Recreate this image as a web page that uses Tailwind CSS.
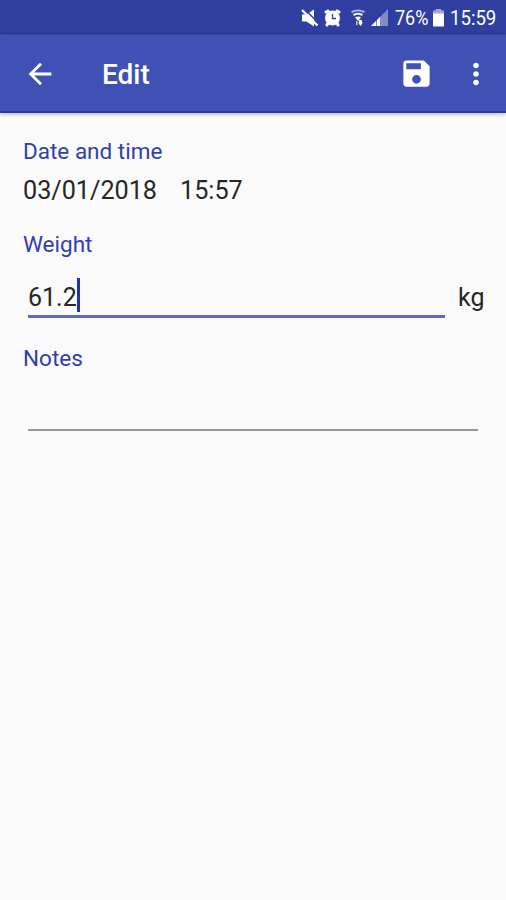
<!DOCTYPE html>
<html lang="en">
  <head>
    <meta charset="UTF-8" />
    <meta name="viewport" content="width=device-width, initial-scale=1" />
    <title>Edit</title>
    <script src="https://cdn.jsdelivr.net/npm/@tailwindcss/browser@4"></script>
  </head>
  <body class="min-h-screen bg-[#fafafa] font-[Roboto,sans-serif] text-[#262626]">
    <!-- Status bar -->
    <div class="flex h-[34px] items-center justify-end bg-[#303f9f] pt-[2px] pr-[10px] text-white">
      <svg class="mr-[5px] h-[18px] w-[18px]" viewBox="0 0 18 18">
        <path fill="currentColor" d="M1 5.500h4.500l7.500-5v17l-7.500-5H1z" />
        <path stroke="#303f9f" stroke-width="1.500" d="M3.500 0l15 15" />
        <path stroke="currentColor" stroke-width="2.400" d="M1 1l15.500 15.500" />
      </svg>
      <svg class="mr-[9px] h-[18px] w-[18px]" viewBox="0 0 18 18" fill="none">
        <circle cx="8.500" cy="9" r="7.500" fill="currentColor" />
        <path stroke="currentColor" stroke-width="3" stroke-linecap="round" d="M2 3l2-1M15 3l-2-1M4 14l-1 2M13 14l1 2" />
        <path stroke="#303f9f" stroke-width="1.300" d="M8.500 5v4.500h3.500" />
      </svg>
      <svg class="mr-[5px] h-[18px] w-[15px]" viewBox="0 0 15 18" fill="none">
        <path stroke="currentColor" stroke-opacity=".6" stroke-width="2" d="M.5 3q6.500-3 13 0" />
        <path stroke="currentColor" stroke-opacity=".9" stroke-width="2.200" d="M2.500 6q4.500-2.500 9 0" />
        <path fill="currentColor" d="M4 8.500q3-2 6 0L7 12zM8 11h3v2.500h1L9.500 17 7 13.500h1z" />
        <path fill="currentColor" fill-opacity=".7" d="M5 12h1.500v4H5z" />
      </svg>
      <svg class="mr-[7px] h-[18px] w-[17px]" viewBox="0 0 17 18">
        <path fill="currentColor" fill-opacity=".4" d="M17 0v17H0z" />
        <path fill="currentColor" d="M9 8v9H6v-6zM5 12v5H0z" />
      </svg>
      <span class="w-[33px] text-[20px] leading-none whitespace-nowrap"><span class="inline-block origin-left scale-x-[.9]">76%</span></span>
      <svg class="mr-[6px] ml-[5px] h-[18px] w-[11px]" viewBox="0 0 12 18" preserveAspectRatio="none">
        <path fill="currentColor" fill-opacity=".55" d="M3 0h6v1.500h3V5H0V1.500h3z" />
        <path fill="currentColor" d="M0 4.500h12v13H0z" />
      </svg>
      <span class="w-[46px] text-[20px] leading-none whitespace-nowrap"><span class="inline-block origin-left scale-x-[.93]">15:59</span></span>
    </div>

    <!-- Toolbar -->
    <header class="flex h-[79px] items-center border-t border-b-2 border-t-[#35459f] border-b-[#2339a5] bg-[#3f51b5] pt-[1px] text-white shadow-[0_1px_4px_rgba(0,0,0,.3)]">
      <svg class="ml-[23px] h-[34px] w-[34px]" viewBox="0 0 24 24" fill="currentColor">
        <path d="M20 11H7.830l5.590-5.590L12 4l-8 8 8 8 1.410-1.410L7.830 13H20v-2z" />
      </svg>
      <h1 class="ml-[45px] pt-[2px] text-[28px] leading-none font-medium">Edit</h1>
      <svg class="ml-auto h-[35px] w-[35px]" viewBox="0 0 24 24" fill="currentColor">
        <path d="M17 3H5c-1.110 0-2 .9-2 2v14c0 1.100.89 2 2 2h14c1.100 0 2-.9 2-2V7l-4-4zm-5 16c-1.660 0-3-1.340-3-3s1.340-3 3-3 3 1.340 3 3-1.340 3-3 3zm3-10H5V5h10v4z" />
      </svg>
      <svg class="mr-[13px] ml-[25px] h-[34px] w-[34px]" viewBox="0 0 24 24" fill="currentColor">
        <path d="M12 8c1.100 0 2-.9 2-2s-.9-2-2-2-2 .9-2 2 .9 2 2 2zm0 2c-1.100 0-2 .9-2 2s.9 2 2 2 2-.9 2-2-.9-2-2-2zm0 6c-1.100 0-2 .9-2 2s.9 2 2 2 2-.9 2-2-.9-2-2-2z" />
      </svg>
    </header>

    <!-- Form -->
    <main class="pt-[24px] pl-[23px]">
      <div class="text-[22.500px] leading-[28px] text-[#3040a8]">Date and time</div>
      <div class="mt-[12px] flex gap-[23px] text-[25.200px] leading-[28px]">
        <span>03/01/2018</span>
        <span>15:57</span>
      </div>

      <div class="mt-[25px] text-[22.500px] leading-[28px] text-[#3040a8]">Weight</div>
      <div class="mt-[20px] flex pl-[5px] text-[25px] leading-[40px]">
        <div class="flex h-[40px] w-[417px] border-b-3 border-[#5c6bc0]">
          <span class="w-[49px]">61.2</span>
          <span class="h-[34px] w-[3px] bg-[#2433a8]"></span>
        </div>
        <span class="ml-[13px]">kg</span>
      </div>

      <div class="mt-[26px] text-[22.500px] leading-[28px] text-[#3040a8]">Notes</div>
      <div class="ml-[5px] h-[59px] w-[450px] border-b-2 border-[#969696]"></div>
    </main>
  </body>
</html>
